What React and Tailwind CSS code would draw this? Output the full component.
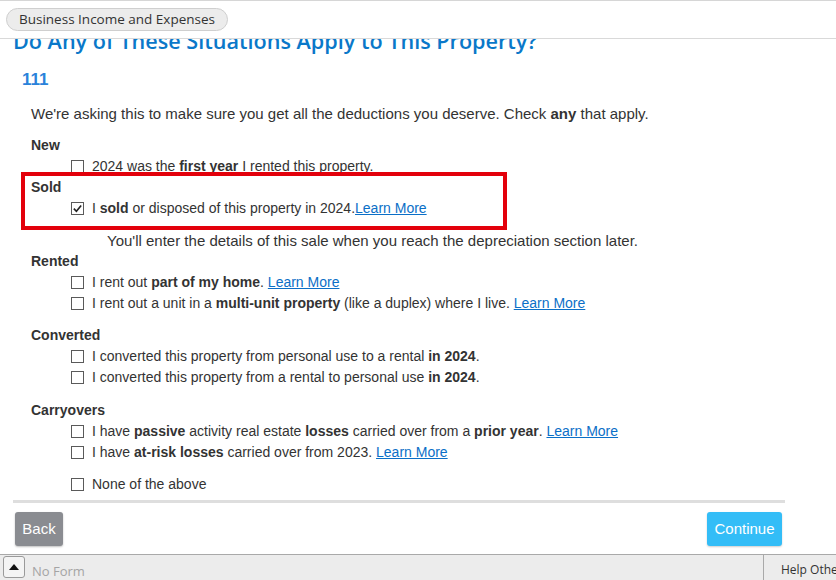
import React from 'react';

const Box = ({ checked = false }) => (
    <span className="inline-flex items-center justify-center w-[13px] h-[13px] border border-[#5a5a5a] bg-white shrink-0">
        {checked && (
            <svg viewBox="0 0 12 12" className="w-[11px] h-[11px]">
                <path d="M2 6.2 L4.8 9 L10 2.8" fill="none" stroke="#222" strokeWidth="1.8" />
            </svg>
        )}
    </span>
);

const More = ({ space = true }) => (
    <>
        {space && ' '}
        <span className="text-[#0b6fc7] underline">Learn More</span>
    </>
);

const Row = ({ checked, children }) => (
    <div className="flex items-center h-[21px] pl-[71px] gap-[8px]">
        <Box checked={checked} />
        <span>{children}</span>
    </div>
);

const Label = ({ children, className = '' }) => (
    <div className={`h-[21px] leading-[21px] pl-[31px] font-bold ${className}`}>{children}</div>
);

export default function App() {
    return (
        <div className="w-[836px] h-[580px] flex flex-col bg-white text-[#333] font-['Liberation_Sans',Arial,sans-serif] overflow-hidden">
            {/* header */}
            <div className="h-[39px] shrink-0 border-t border-[#d6d6d6] border-b border-b-[#d9d9d9] flex items-start pt-[7px] pl-[6px] relative z-10 bg-white">
                <div className="h-[23px] px-[12px] flex items-center rounded-full bg-[#ececec] border border-[#cfcfcf] text-[13.5px] text-[#333] font-['Open_Sans',sans-serif]">
                    Business Income and Expenses
                </div>
            </div>

            {/* scrolled content */}
            <div className="flex-1 overflow-hidden relative text-[14px]">
                <h1 className="mt-[-12px] pl-[13px] text-[21.6px] leading-[28px] font-semibold text-[#0a78c9] font-['Open_Sans',sans-serif]">
                    Do Any of These Situations Apply to This Property?
                </h1>
                <div className="mt-[13px] pl-[22px] text-[17px] leading-[24px] font-bold text-[#2a82da]">111</div>
                <p className="mt-[11px] pl-[31px] text-[15px] leading-[21px]">
                    We're asking this to make sure you get all the deductions you deserve. Check <b>any</b> that apply.
                </p>

                <Label className="mt-[11px]">New</Label>
                <Row>2024 was the <b>first year</b> I rented this property.</Row>
                <Label>Sold</Label>
                <Row checked>I <b>sold</b> or disposed of this property in 2024.<More space={false} /></Row>
                <div className="mt-[11px] pl-[107px] h-[21px] leading-[21px] text-[15px]">
                    You'll enter the details of this sale when you reach the depreciation section later.
                </div>

                <Label>Rented</Label>
                <Row>I rent out <b>part of my home</b>.<More /></Row>
                <Row>I rent out a unit in a <b>multi-unit property</b> (like a duplex) where I live.<More /></Row>

                <Label className="mt-[11px]">Converted</Label>
                <Row>I converted this property from personal use to a rental <b>in 2024</b>.</Row>
                <Row>I converted this property from a rental to personal use <b>in 2024</b>.</Row>

                <Label className="mt-[12px]">Carryovers</Label>
                <Row>I have <b>passive</b> activity real estate <b>losses</b> carried over from a <b>prior year</b>.<More /></Row>
                <Row>I have <b>at-risk losses</b> carried over from 2023.<More /></Row>

                <div className="mt-[11px]">
                    <Row>None of the above</Row>
                </div>

                <div className="mt-[5px] ml-[13px] w-[772px] h-[3px] bg-[#dedede]" />

                <div className="mt-[9px] w-[782px] pl-[15px] flex justify-between">
                    <button className="h-[34px] w-[48px] rounded-[3px] bg-[#8a8c91] text-white text-[15px] shadow-[0_1px_2px_rgba(0,0,0,0.25)]">
                        Back
                    </button>
                    <button className="h-[34px] w-[75px] rounded-[3px] bg-[#33bdf7] text-white text-[15px] shadow-[0_1px_2px_rgba(0,0,0,0.2)]">
                        Continue
                    </button>
                </div>

                {/* annotation */}
                <div className="absolute left-[21px] top-[133px] w-[486px] h-[58px] border-[4px] border-[#e3000b] pointer-events-none" />
            </div>

            {/* footer bar */}
            <div className="h-[26px] shrink-0 bg-[#ececec] border-t border-[#a9a9a9] flex items-start text-[13px]">
                <div className="ml-[3px] mt-[1px] w-[22px] h-[22px] rounded-[3px] border border-[#9a9a9a] bg-[#f4f4f4] flex items-center justify-center">
                    <svg viewBox="0 0 10 6" className="w-[10px] h-[6px]">
                        <path d="M0 6 L5 0 L10 6 Z" fill="#111" />
                    </svg>
                </div>
                <span className="ml-[7px] mt-[6px] leading-[20px] text-[#a4a4a4] font-['Open_Sans',sans-serif]">No Form</span>
                <div className="ml-auto w-[73px] h-full border-l border-[#a9a9a9] pl-[17px] pt-[6px] leading-[18px] text-[12px] text-[#333] whitespace-nowrap overflow-hidden font-['Open_Sans',sans-serif]">
                    Help Other
                </div>
            </div>
        </div>
    );
}
